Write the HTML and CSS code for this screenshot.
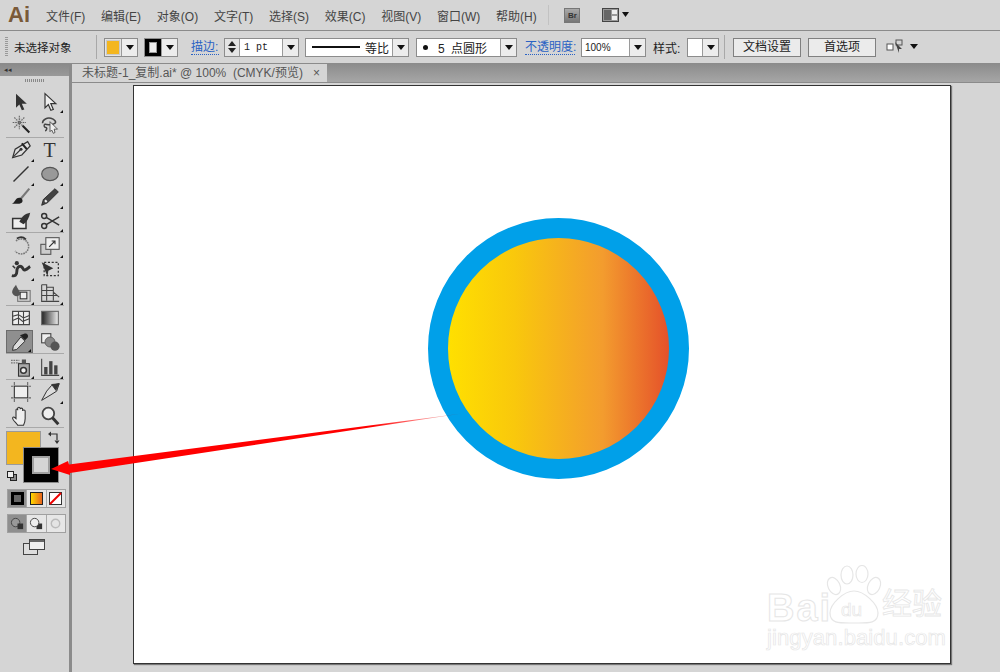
FILE: index.html
```html
<!DOCTYPE html>
<html lang="en">
<head>
    <meta charset="UTF-8">
    <title>未标题-1_复制.ai</title>
    <link rel="stylesheet" href="styles.css">
</head>
<body>
<div class="app">

    <div class="menubar">
        <span class="logo">Ai</span>
        <span class="menu">文件(F)</span>
        <span class="menu">编辑(E)</span>
        <span class="menu">对象(O)</span>
        <span class="menu">文字(T)</span>
        <span class="menu">选择(S)</span>
        <span class="menu">效果(C)</span>
        <span class="menu">视图(V)</span>
        <span class="menu">窗口(W)</span>
        <span class="menu">帮助(H)</span>
        <span class="menu-sep"></span>
        <span class="br-icon">Br</span>
        <svg class="layout-icon" width="28" height="16" viewBox="0 0 28 16">
            <rect x="0.5" y="1.5" width="16" height="13" fill="#999" stroke="#444"/>
            <rect x="2" y="3" width="7" height="10" fill="#666"/>
            <rect x="10" y="3" width="5" height="4" fill="#eee"/>
            <rect x="10" y="9" width="5" height="4" fill="#eee"/>
            <path d="M20 5h7l-3.500 5z" fill="#111"/>
        </svg>
    </div>

    <div class="controlbar">
        <span class="grip"></span>
        <span class="no-select">未选择对象</span>
        <span class="bar-sep sep-a"></span>

        <span class="combo combo-fill">
            <span class="fill-chip"></span>
            <span class="drop"></span>
        </span>
        <span class="combo combo-stroke">
            <span class="stroke-chip"></span>
            <span class="drop"></span>
        </span>

        <span class="link link-stroke">描边:</span>
        <span class="combo combo-pt">
            <span class="spin"><i class="up"></i><i class="down"></i></span>
            <span class="field pt-text">1 pt</span>
            <span class="drop"></span>
        </span>
        <span class="combo combo-line">
            <span class="field line-field"><span class="line-sample"></span>等比</span>
            <span class="drop"></span>
        </span>
        <span class="combo combo-brush">
            <span class="field brush-field"><span class="dot"></span>5 点圆形</span>
            <span class="drop"></span>
        </span>

        <span class="link link-opacity">不透明度:</span>
        <span class="combo combo-opacity">
            <span class="field opacity-text">100%</span>
            <span class="drop"></span>
        </span>
        <span class="style-label">样式:</span>
        <span class="combo combo-style">
            <span class="field"></span>
            <span class="drop"></span>
        </span>
        <span class="bar-sep sep-b"></span>
        <span class="btn btn-doc">文档设置</span>
        <span class="btn">首选项</span>
        <svg class="align-icon" width="32" height="16" viewBox="0 0 32 16">
            <rect x="1" y="5" width="6" height="6" fill="#fff" stroke="#555"/>
            <rect x="10" y="1" width="6" height="5" fill="none" stroke="#555"/>
            <path d="M9 3l7 7-3 0 0 4z" fill="#444"/>
            <path d="M24 5h8l-4 5z" fill="#111"/>
        </svg>
    </div>

    <div class="workspace">

        <div class="toolbox">
            <div class="panel-head"><span class="collapse">◂◂</span></div>
            <div class="tool-grip"></div>

            <div class="tool-group">
                <span class="tool"><svg viewBox="0 0 24 24"><path d="M6 2l13 12-6 0 3 7-3 1-3-7-4 4z" fill="#333"/></svg></span>
                <span class="tool more"><svg viewBox="0 0 24 24"><path d="M6 2l13 12-6 0 3 7-3 1-3-7-4 4z" fill="#eee" stroke="#333" stroke-width="1.400"/></svg></span>
                <span class="tool"><svg viewBox="0 0 24 24"><circle cx="10" cy="9" r="6" fill="#ccc"/><path d="M10 1v16M2 9h16M4 3l12 12M16 3L4 15" stroke="#666" stroke-width="1.300" stroke-dasharray="2 1"/><path d="M14 13l8 8" stroke="#222" stroke-width="2.500"/></svg></span>
                <span class="tool"><svg viewBox="0 0 24 24"><path d="M3 10c0-5 6-7 10-6s7 4 5 6-10 2-12 1c-2 1-1 4 1 4s1 4-1 4" fill="none" stroke="#444" stroke-width="1.800"/><path d="M12 8l9 9-4 0 1 4-2 1-2-4-2 2z" fill="#eee" stroke="#444"/></svg></span>
            </div>
            <div class="tool-group">
                <span class="tool more"><svg viewBox="0 0 24 24"><path d="M20 2l3 5-10 11-11 3 3-10z" fill="#ddd" stroke="#333" stroke-width="1.500"/><path d="M13 4l6 7" stroke="#222" stroke-width="2.500"/><path d="M3 20l8-8" stroke="#333" stroke-width="1.300"/><circle cx="12" cy="11" r="1.800" fill="#333"/></svg></span>
                <span class="tool more tool-type">T</span>
                <span class="tool more"><svg viewBox="0 0 24 24"><path d="M3 21L21 3" stroke="#333" stroke-width="1.800"/></svg></span>
                <span class="tool more"><svg viewBox="0 0 24 24"><ellipse cx="12" cy="12" rx="10" ry="8" fill="#999" stroke="#555" stroke-width="1.400"/></svg></span>
                <span class="tool"><svg viewBox="0 0 24 24"><path d="M22 2L11 15" stroke="#777" stroke-width="2.500"/><path d="M11 13c4 1 4 7-1 7H1c4-1 4-8 10-7z" fill="#222"/></svg></span>
                <span class="tool more"><svg viewBox="0 0 24 24"><path d="M18 2l4 4-13 13-7 3 2-7z" fill="#444" stroke="#222"/><path d="M6 16l2 2" stroke="#eee" stroke-width="2.500"/></svg></span>
                <span class="tool"><svg viewBox="0 0 24 24"><path d="M2 9h16v12H2z" fill="#eee" stroke="#333" stroke-width="1.800"/><path d="M23 2c-6 1-10 4-13 11l5 3c4-3 7-8 8-14z" fill="#333"/></svg></span>
                <span class="tool more"><svg viewBox="0 0 24 24"><circle cx="5" cy="6" r="3" fill="none" stroke="#333" stroke-width="1.800"/><circle cx="5" cy="18" r="3" fill="none" stroke="#333" stroke-width="1.800"/><path d="M8 8l15 9M8 16l15-9" stroke="#333" stroke-width="1.800"/></svg></span>
            </div>
            <div class="tool-group">
                <span class="tool more"><svg viewBox="0 0 24 24"><path d="M6 6a9 9 0 1 1-1 12" fill="none" stroke="#777" stroke-width="1.800" stroke-dasharray="2 1"/><path d="M7 3a9 9 0 0 1 11 1" fill="none" stroke="#333" stroke-width="1.800"/></svg></span>
                <span class="tool more"><svg viewBox="0 0 24 24"><rect x="1" y="10" width="12" height="12" fill="#ccc" stroke="#555" stroke-width="1.300"/><rect x="7" y="2" width="16" height="14" fill="#eee" stroke="#555" stroke-width="1.300"/><path d="M11 13l7-7M14 6h4v4" fill="none" stroke="#333" stroke-width="1.300"/></svg></span>
                <span class="tool more"><svg viewBox="0 0 24 24"><path d="M1 20c4 1 6-1 6-5s2-7 5-6 2 5 5 4 4-3 6-4" fill="none" stroke="#333" stroke-width="3.500"/><circle cx="7" cy="5" r="2.500" fill="#333"/><path d="M2 8l3 3" stroke="#333" stroke-width="1.800"/></svg></span>
                <span class="tool"><svg viewBox="0 0 24 24"><rect x="5" y="4" width="17" height="16" fill="none" stroke="#333" stroke-width="1.500" stroke-dasharray="2.500 2"/><path d="M2 4l14 7-6 3-1 7z" fill="#333"/></svg></span>
                <span class="tool more"><svg viewBox="0 0 24 24"><rect x="8" y="9" width="15" height="13" fill="none" stroke="#777" stroke-width="1.300"/><rect x="11" y="11" width="8" height="8" fill="#eee" stroke="#333" stroke-width="1.300"/><path d="M6 2c-2 3-6 7-4 11s7 3 9 1-4-8-5-12z" fill="#555"/></svg></span>
                <span class="tool more"><svg viewBox="0 0 24 24"><path d="M2 2v20h21M2 2h6v19M8 5h8v16M2 9h14M2 15h19M16 11l7 6" fill="none" stroke="#444" stroke-width="1.300"/></svg></span>
            </div>
            <div class="tool-group">
                <span class="tool"><svg viewBox="0 0 24 24"><rect x="2" y="4" width="20" height="16" fill="#eee" stroke="#333" stroke-width="1.300"/><path d="M2 10l7-2 6 4 7-3M2 15l7-3 5 4 8-3M9 4v16M15 4v16" fill="none" stroke="#444" stroke-width="1.300"/></svg></span>
                <span class="tool"><svg viewBox="0 0 24 24"><rect x="2" y="4" width="20" height="16" fill="url(#mesh-grad)" stroke="#666" stroke-width="1.300"/></svg></span>
                <span class="tool tool-on more"><svg viewBox="0 0 24 24"><path d="M17 2c3-1 6 2 4 5l-3 3-6-6z" fill="#222"/><path d="M13 6l5 5-10 10-5 1 1-5z" fill="#ddd" stroke="#333" stroke-width="1.200"/></svg></span>
                <span class="tool"><svg viewBox="0 0 24 24"><rect x="2" y="2" width="11" height="11" fill="#eee" stroke="#444" stroke-width="1.300"/><circle cx="12" cy="12" r="6" fill="#888" stroke="#555"/><circle cx="18" cy="17" r="5.500" fill="#555"/></svg></span>
            </div>
            <div class="tool-group">
                <span class="tool more"><svg viewBox="0 0 24 24"><path d="M0 4h10M0 7h10" stroke="#777" stroke-width="1.300" stroke-dasharray="2 1"/><rect x="9" y="8" width="13" height="15" fill="#aaa" stroke="#333" stroke-width="1.300"/><circle cx="15" cy="16" r="3.500" fill="#eee" stroke="#333" stroke-width="1.800"/><rect x="13" y="3" width="5" height="5" fill="#555"/></svg></span>
                <span class="tool more"><svg viewBox="0 0 24 24"><path d="M2 2v20h21" fill="none" stroke="#444" stroke-width="1.300"/><rect x="5" y="12" width="4" height="9" fill="#444"/><rect x="11" y="5" width="4" height="16" fill="#444"/><rect x="17" y="10" width="4" height="11" fill="#444"/></svg></span>
            </div>
            <div class="tool-group">
                <span class="tool"><svg viewBox="0 0 24 24"><rect x="4" y="5" width="16" height="14" fill="#eee" stroke="#333" stroke-width="1.300"/><path d="M4 0v4M20 0v4M4 20v4M20 20v4M0 5h3M21 5h3M0 19h3M21 19h3" stroke="#666" stroke-width="1.300"/></svg></span>
                <span class="tool more"><svg viewBox="0 0 24 24"><path d="M23 2l-3 9-8 5-10 6 6-11 6-7z" fill="#ddd" stroke="#333" stroke-width="1.200"/><path d="M14 3l9-1-4 8z" fill="#333" stroke="#333"/></svg></span>
                <span class="tool"><svg viewBox="0 0 24 24"><path d="M8 23c-2-3-7-7-6-9s3 0 4 1V5c0-2 2-2 2 0V3c0-2 3-2 3 0v1c0-2 3-2 3 0v2c0-2 3-1 3 0v9c0 3-1 6-2 8z" fill="#eee" stroke="#333" stroke-width="1.300"/></svg></span>
                <span class="tool"><svg viewBox="0 0 24 24"><circle cx="10" cy="9" r="7" fill="#eee" stroke="#444" stroke-width="2.200"/><path d="M15 14l7 8" stroke="#333" stroke-width="3.500"/></svg></span>
            </div>

            <div class="colors">
                <span class="swatch-fill"></span>
                <span class="swatch-stroke"><span class="swatch-hole"></span></span>
                <svg class="swap" width="14" height="14" viewBox="0 0 14 14"><path d="M4 3h6v6" fill="none" stroke="#333" stroke-width="1.200"/><path d="M1 3l3-2.500v5zM10 13l-2.500-3.500h5z" fill="#333"/></svg>
                <span class="default-a"></span>
                <span class="default-b"></span>
            </div>

            <div class="mode-row">
                <span class="mode mode-on"><span class="mode-color"></span></span>
                <span class="mode"><span class="mode-grad"></span></span>
                <span class="mode"><svg class="mode-none" viewBox="0 0 13 13"><rect x="0.500" y="0.500" width="12" height="12" fill="#fff" stroke="#333"/><path d="M1 12L12 1" stroke="#e00" stroke-width="2"/></svg></span>
            </div>
            <div class="mode-row draw-row">
                <span class="mode mode-on"><svg viewBox="0 0 18 16"><circle cx="7" cy="7" r="4.500" fill="#999" stroke="#444"/><rect x="9" y="8" width="6" height="6" fill="#333"/></svg></span>
                <span class="mode"><svg viewBox="0 0 18 16"><rect x="9" y="8" width="6" height="6" fill="#333"/><circle cx="7" cy="7" r="4.500" fill="#eee" stroke="#444"/></svg></span>
                <span class="mode"><svg viewBox="0 0 18 16"><circle cx="9" cy="8" r="4.500" fill="#e4e4e4" stroke="#bbb" stroke-width="1.500"/></svg></span>
            </div>
            <svg class="screen-mode" width="22" height="16" viewBox="0 0 22 16">
                <rect x="0.500" y="4.500" width="14" height="11" fill="#ddd" stroke="#444"/>
                <rect x="6.500" y="0.500" width="15" height="10" fill="#f0f0f0" stroke="#444"/>
                <rect x="7" y="1" width="14" height="2" fill="#666"/>
            </svg>
        </div>

        <div class="docarea">
            <div class="tabstrip">
                <div class="tab">
                    <span class="tab-title">未标题-1_复制.ai* @ 100%&nbsp; (CMYK/预览)</span>
                    <span class="tab-close">×</span>
                </div>
            </div>
            <div class="canvas">
                <div class="artboard">
                    <div class="ball"></div>
                    <div class="watermark">
                        <svg class="paw" width="56" height="60" viewBox="0 0 56 60">
                            <g fill="#fff" stroke="#e6e6e6" stroke-width="1.200">
                                <ellipse cx="8" cy="21" rx="6" ry="9" transform="rotate(-25 8 21)"/>
                                <ellipse cx="21" cy="10" rx="6" ry="9"/>
                                <ellipse cx="36" cy="9" rx="6" ry="8.500"/>
                                <ellipse cx="48" cy="21" rx="6" ry="9" transform="rotate(25 48 21)"/>
                                <path d="M4 48c0-9 14-22 24-22s24 13 24 22c0 11-10 10-24 10S4 59 4 48z"/>
                            </g>
                        </svg>
                        <span class="wm-bai">Bai</span>
                        <span class="wm-du">du</span>
                        <span class="wm-cn">经验</span>
                        <span class="wm-url">jingyan.baidu.com</span>
                    </div>
                </div>
            </div>
        </div>
    </div>

    <svg class="arrow" width="420" height="70" viewBox="0 0 420 70">
        <defs>
            <linearGradient id="arrow-grad" gradientUnits="userSpaceOnUse" x1="0" y1="60" x2="412" y2="6">
                <stop offset="0" stop-color="#f00"/>
                <stop offset="0.780" stop-color="#f00"/>
                <stop offset="0.900" stop-color="#f00" stop-opacity="0.500"/>
                <stop offset="1" stop-color="#a00" stop-opacity="0.200"/>
            </linearGradient>
        </defs>
        <path d="M1 61L18 53 19 56.500 412 5.500 20 65 20 67z" fill="url(#arrow-grad)"/>
    </svg>

    <svg class="svg-defs" width="0" height="0">
        <defs>
            <linearGradient id="mesh-grad"><stop offset="0" stop-color="#222"/><stop offset="1" stop-color="#eee"/></linearGradient>
        </defs>
    </svg>
</div>
</body>
</html>
```

FILE: styles.css
```css
* {
    box-sizing: border-box;
}

body {
    margin: 0;
    background-color: #d5d5d5;
    color: #333;
    font-family: "Liberation Sans", "Noto Sans CJK SC", sans-serif;
    font-size: 12px;
}

.app {
    position: relative;
    width: 1000px;
    height: 672px;
    display: flex;
    flex-direction: column;
    overflow: hidden;
}

.svg-defs {
    position: absolute;
}

/* menu bar */
.menubar {
    height: 31px;
    flex: none;
    display: flex;
    align-items: center;
    border-bottom: 1px solid #8b8b8b;
    background-color: #d5d5d5;
}

.logo {
    width: 46px;
    padding-left: 8px;
    color: #7a5a38;
    font-size: 22px;
    font-weight: bold;
}

.menu {
    margin-right: 15.750px;
    color: #444;
    white-space: nowrap;
}

.menu-sep {
    width: 1px;
    height: 20px;
    margin-left: -4px;
    margin-right: 15px;
    background-color: #c2c2c2;
}

.br-icon {
    width: 16px;
    height: 15px;
    margin-right: 22px;
    border: 1px solid #777;
    background: linear-gradient(#aaa, #777);
    color: #333;
    font-size: 8px;
    font-weight: bold;
    line-height: 13px;
    text-align: center;
}

/* control bar */
.controlbar {
    height: 33px;
    flex: none;
    display: flex;
    align-items: center;
    border-bottom: 1px solid #8b8b8b;
    color: #222;
    white-space: nowrap;
}

.grip {
    width: 3px;
    height: 20px;
    margin-left: 5px;
    background: repeating-linear-gradient(#999 0 1px, #d5d5d5 1px 2px);
}

.no-select {
    width: 82px;
    margin-left: 6px;
    font-size: 11.500px;
}

.bar-sep {
    width: 1px;
    height: 24px;
    background-color: #a8a8a8;
}

.sep-a {
    margin-right: 7px;
}

.sep-b {
    margin: 0 7px 0 5px;
}

.combo {
    height: 19px;
    display: flex;
    border: 1px solid #8c8c8c;
    background-color: #e4e4e4;
}

.drop {
    position: relative;
    width: 16px;
    flex: none;
    border-left: 1px solid #9a9a9a;
    background-color: #ececec;
}

.drop::after {
    content: "";
    position: absolute;
    left: 4px;
    top: 6px;
    border-left: 4px solid transparent;
    border-right: 4px solid transparent;
    border-top: 5px solid #111;
}

.field {
    flex: 1;
    min-width: 0;
    display: flex;
    align-items: center;
    background-color: #fff;
}

.combo-fill {
    width: 34px;
    margin-right: 6px;
}

.fill-chip {
    flex: 1;
    margin: 1px;
    border: 1px solid #c9c9c9;
    background-color: #f3b61f;
}

.combo-stroke {
    width: 34px;
    margin-right: 13px;
}

.stroke-chip {
    flex: 1;
    padding: 3px 4px;
    background-color: #000;
    display: flex;
}

.stroke-chip::before {
    content: "";
    flex: 1;
    border: 1px solid #999;
    background-color: #eee;
}

.link {
    color: #2a62c4;
    border-bottom: 1px dotted #2a62c4;
    line-height: 14px;
}

.link-stroke {
    width: 28px;
    margin-right: 5px;
}

.combo-pt {
    width: 75px;
    margin-right: 6px;
}

.spin {
    width: 15px;
    flex: none;
    display: flex;
    flex-direction: column;
    justify-content: space-evenly;
    align-items: center;
    border-right: 1px solid #9a9a9a;
}

.spin i {
    border-left: 4px solid transparent;
    border-right: 4px solid transparent;
}

.spin .up {
    border-bottom: 5px solid #222;
}

.spin .down {
    border-top: 5px solid #222;
}

.pt-text {
    padding-left: 4px;
    font-family: "Liberation Mono", monospace;
    font-size: 10px;
}

.combo-line {
    width: 104px;
    margin-right: 7px;
}

.line-field {
    padding-left: 6px;
}

.line-sample {
    width: 48px;
    height: 2px;
    margin-right: 5px;
    background-color: #111;
}

.combo-brush {
    width: 101px;
    margin-right: 8px;
}

.brush-field {
    padding-left: 6px;
    word-spacing: 3px;
}

.dot {
    width: 5px;
    height: 5px;
    margin-right: 10px;
    border-radius: 50%;
    background-color: #111;
}

.link-opacity {
    width: 50px;
    margin-right: 6px;
}

.combo-opacity {
    width: 65px;
    margin-right: 7px;
}

.opacity-text {
    padding-left: 3px;
    font-size: 10px;
}

.style-label {
    width: 27px;
    margin-right: 7px;
}

.combo-style {
    width: 32px;
}

.btn {
    width: 68px;
    height: 19px;
    margin-right: 7px;
    border: 1px solid #808080;
    background-color: #ebebeb;
    line-height: 17px;
    text-align: center;
}

.btn-doc {
    margin-left: 1px;
}

.align-icon {
    margin-left: 3px;
}

/* tools */
.workspace {
    flex: 1;
    min-height: 0;
    display: flex;
}

.toolbox {
    width: 72px;
    flex: none;
    border-right: 3px solid #8b8b8b;
    background-color: #d5d5d5;
}

.panel-head {
    height: 12px;
    background: linear-gradient(#8a8a8a, #999);
    color: #333;
    font-size: 7px;
    line-height: 11px;
    padding-left: 4px;
}

.tool-grip {
    width: 19px;
    height: 3px;
    margin: 3px auto 7px;
    background: repeating-linear-gradient(90deg, #888 0 1px, transparent 1px 2px);
}

.tool-group {
    display: grid;
    grid-template-columns: 29px 29px;
    grid-auto-rows: 23.400px;
    margin: 0 5px 0 6px;
    padding: 1px 0 0;
    border-bottom: 1px solid #a9a9a9;
    justify-content: center;
}

.tool {
    position: relative;
    display: flex;
    align-items: center;
    justify-content: center;
}

.tool svg {
    width: 20px;
    height: 20px;
}

.more::after {
    content: "";
    position: absolute;
    right: 1px;
    bottom: 0;
    border-left: 3px solid transparent;
    border-bottom: 3px solid #111;
}

.tool-type {
    font-family: "Liberation Serif", serif;
    font-size: 20px;
    color: #333;
}

.tool-on {
    margin-right: 2px;
    border: 1px solid #6c6c6c;
    background-color: #8f8f8f;
}

.colors {
    position: relative;
    height: 57px;
    margin-top: 3px;
}

.swatch-fill {
    position: absolute;
    left: 6px;
    top: 0;
    width: 35px;
    height: 34px;
    border: 1px solid #9a9a9a;
    background-color: #f3b61f;
}

.swatch-stroke {
    position: absolute;
    left: 23px;
    top: 16px;
    width: 36px;
    height: 36px;
    padding: 8px;
    border: 1px solid #8a8a8a;
    background-color: #000;
}

.swatch-hole {
    display: block;
    width: 18px;
    height: 18px;
    border: 2px solid #a0a0a0;
    background-color: #d5d5d5;
}

.swap {
    position: absolute;
    left: 47px;
    top: 0;
}

.default-a,
.default-b {
    position: absolute;
    width: 7px;
    height: 7px;
    border: 1px solid #222;
}

.default-a {
    left: 7px;
    top: 40px;
    z-index: 1;
    background-color: #eee;
}

.default-b {
    left: 10px;
    top: 43px;
    background-color: #888;
}

.mode-row {
    display: flex;
    width: 59px;
    height: 19px;
    margin: 1px 0 0 7px;
    border: 1px solid #a0a0a0;
}

.draw-row {
    margin-top: 6px;
}

.mode {
    flex: 1;
    display: flex;
    align-items: center;
    justify-content: center;
    border-right: 1px solid #a8a8a8;
    background-color: #e6e6e6;
}

.mode:last-child {
    border-right: 0;
}

.mode svg {
    width: 17px;
    height: 15px;
}

.mode .mode-none {
    width: 13px;
    height: 13px;
}

.mode-on {
    background-color: #8f8f8f;
}

.mode-color {
    width: 13px;
    height: 13px;
    border: 3px solid #000;
    background-color: #666;
}

.mode-grad {
    width: 13px;
    height: 13px;
    border: 1px solid #222;
    background: linear-gradient(90deg, #ffd800, #e8641c);
}

.screen-mode {
    display: block;
    margin: 6px 0 0 23px;
}

/* document */
.docarea {
    flex: 1;
    min-width: 0;
    display: flex;
    flex-direction: column;
}

.tabstrip {
    height: 19px;
    flex: none;
    display: flex;
    background: linear-gradient(#8c8c8c, #a6a6a6);
    border-bottom: 1px solid #8b8b8b;
}

.tab {
    width: 255px;
    display: flex;
    justify-content: space-between;
    padding: 0 7px 0 10px;
    background-color: #d5d5d5;
    color: #555;
    font-size: 12px;
    line-height: 18px;
}

.tab-close {
    color: #555;
}

.canvas {
    flex: 1;
    padding: 2px 0 0 61px;
    background-color: #d5d5d5;
}

.artboard {
    position: relative;
    width: 818px;
    height: 579px;
    border: 1px solid #333;
    box-shadow: 1px 1px 1px #777;
    background-color: #fff;
}

.ball {
    position: absolute;
    left: 294px;
    top: 132px;
    width: 261px;
    height: 261px;
    border: 20px solid #00a0e9;
    border-radius: 50%;
    background: linear-gradient(90deg, #ffe000 0%, #f9c80c 30%, #f39c2e 70%, #e5512a 100%);
    background-origin: padding-box;
}

.watermark {
    position: absolute;
    left: 632px;
    top: 477px;
    width: 182px;
    height: 96px;
    color: #fff;
    -webkit-text-stroke: 1px #e6e6e6;
    white-space: nowrap;
}

.paw {
    position: absolute;
    left: 60px;
    top: 2px;
}

.wm-bai,
.wm-du,
.wm-cn,
.wm-url {
    position: absolute;
    line-height: 1;
}

.wm-bai {
    left: 1px;
    top: 26px;
    font-size: 38px;
    font-weight: bold;
    letter-spacing: 2px;
}

.wm-du {
    left: 75px;
    top: 37px;
    font-size: 19px;
    -webkit-text-stroke-width: 0.700px;
}

.wm-cn {
    left: 116px;
    top: 26px;
    font-size: 30px;
    -webkit-text-stroke-width: 0.800px;
}

.wm-url {
    left: 1px;
    top: 64px;
    font-size: 22px;
    letter-spacing: 0.100px;
    -webkit-text-stroke-width: 0.700px;
}

/* red arrow lying across the panel and the artboard */
.arrow {
    position: absolute;
    left: 50px;
    top: 408px;
}
```
